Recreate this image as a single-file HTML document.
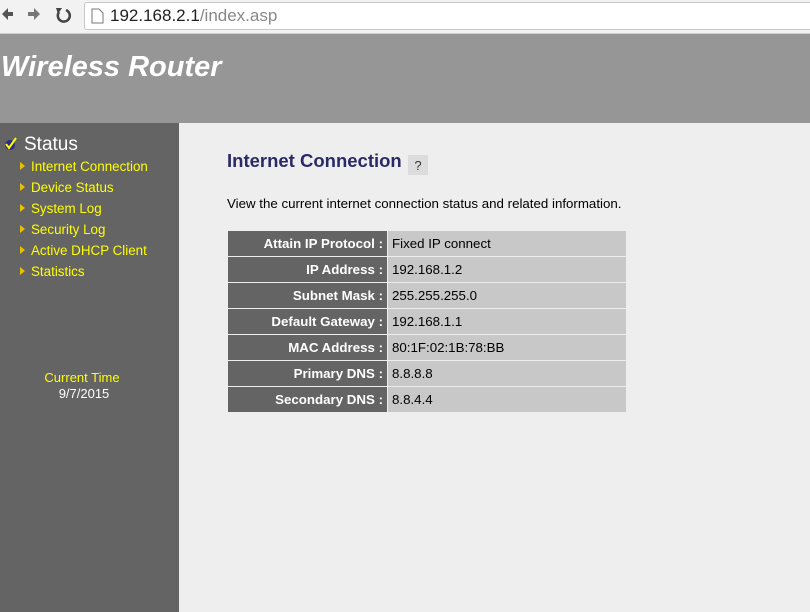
<!DOCTYPE html>
<html><head><style>
body{margin:0;width:810px;height:612px;overflow:hidden;font-family:"Liberation Sans",sans-serif;background:#eeeeee;position:relative}
#bar{position:absolute;left:0;top:0;width:810px;height:33px;background:#f2f2f2;border-bottom:1px solid #d0d0d0}
#url{position:absolute;left:84px;top:2px;width:740px;height:26px;background:#fff;border:1px solid #c8c8c8;border-radius:3px}
#url span{position:absolute;left:25px;top:3px;font-size:17px;color:#222}
#hdr{position:absolute;left:0;top:34px;width:810px;height:89px;background:#969696}
#hdr h1{margin:0;position:absolute;left:1px;top:17px;font-size:29px;font-style:italic;font-weight:bold;color:#fff}
#side{position:absolute;left:0;top:123px;width:179px;height:489px;background:#646464}
.st{position:absolute;left:24px;top:11px;color:#fff;font-size:19px}
.it{position:absolute;left:31px;color:#ffff00;font-size:13.4px}
.ar{position:absolute;left:20px;width:0;height:0;border-left:5px solid #e8c000;border-top:4px solid transparent;border-bottom:4px solid transparent}
h2{position:absolute;left:227px;top:150px;margin:0;font-size:18.5px;color:#2a2a66}
.desc{position:absolute;left:227px;top:196px;font-size:13.3px;color:#000}
table{position:absolute;left:227px;top:230px;border-collapse:separate;border-spacing:1px 1px}
td{height:25px;font-size:13.3px;padding:0}
td.l{width:155px;background:#646464;color:#fff;font-weight:bold;text-align:right;padding-right:4px}
td.v{width:234px;background:#c8c8c8;color:#000;padding-left:4px}
</style></head><body>
<div id="bar">
<svg width="80" height="30" style="position:absolute;left:0;top:2px"><path d="M2 12 L8 6 V10 H13 V14 H8 V18Z" fill="#555"/><path d="M40 12 L34 6 V10 H28 V14 H34 V18Z" fill="#777"/><path d="M66 8 A6 6 0 1 1 59 10" stroke="#444" stroke-width="2.5" fill="none"/><path d="M56 6 L62 6 L58 12Z" fill="#444"/></svg>
<div id="url"><svg width="14" height="16" style="position:absolute;left:6px;top:5px"><path d="M1 1H8L12 5V15H1Z" fill="#fff" stroke="#777"/></svg><span>192.168.2.1<span style="position:static;color:#888">/index.asp</span></span></div>
</div>
<div id="hdr"><h1>Wireless Router</h1></div>
<div id="side">
<svg width="16" height="16" style="position:absolute;left:3px;top:13px"><circle cx="7" cy="9" r="5" fill="#2a2a88"/><path d="M3 8 L6 12 L13 2" stroke="#ff0" stroke-width="2" fill="none"/></svg>
<div class="st">Status</div>
<div class="ar" style="top:39px"></div><div class="it" style="top:36px">Internet Connection</div>
<div class="ar" style="top:60px"></div><div class="it" style="top:57px">Device Status</div>
<div class="ar" style="top:81px"></div><div class="it" style="top:78px">System Log</div>
<div class="ar" style="top:102px"></div><div class="it" style="top:99px">Security Log</div>
<div class="ar" style="top:123px"></div><div class="it" style="top:120px">Active DHCP Client</div>
<div class="ar" style="top:144px"></div><div class="it" style="top:141px">Statistics</div>
<div style="position:absolute;left:0;width:164px;text-align:center;top:247px;color:#ff0;font-size:13px">Current Time</div>
<div style="position:absolute;left:0;width:168px;text-align:center;top:263px;color:#fff;font-size:13px">9/7/2015</div>
</div>
<h2>Internet Connection</h2>
<div style="position:absolute;left:408px;top:155px;width:20px;height:20px;background:#dcdcdc;font-size:13px;color:#333;text-align:center;line-height:22px">?</div>
<div class="desc">View the current internet connection status and related information.</div>
<table>
<tr><td class="l">Attain IP Protocol :</td><td class="v">Fixed IP connect</td></tr>
<tr><td class="l">IP Address :</td><td class="v">192.168.1.2</td></tr>
<tr><td class="l">Subnet Mask :</td><td class="v">255.255.255.0</td></tr>
<tr><td class="l">Default Gateway :</td><td class="v">192.168.1.1</td></tr>
<tr><td class="l">MAC Address :</td><td class="v">80:1F:02:1B:78:BB</td></tr>
<tr><td class="l">Primary DNS :</td><td class="v">8.8.8.8</td></tr>
<tr><td class="l">Secondary DNS :</td><td class="v">8.8.4.4</td></tr>
</table>
</body></html>
